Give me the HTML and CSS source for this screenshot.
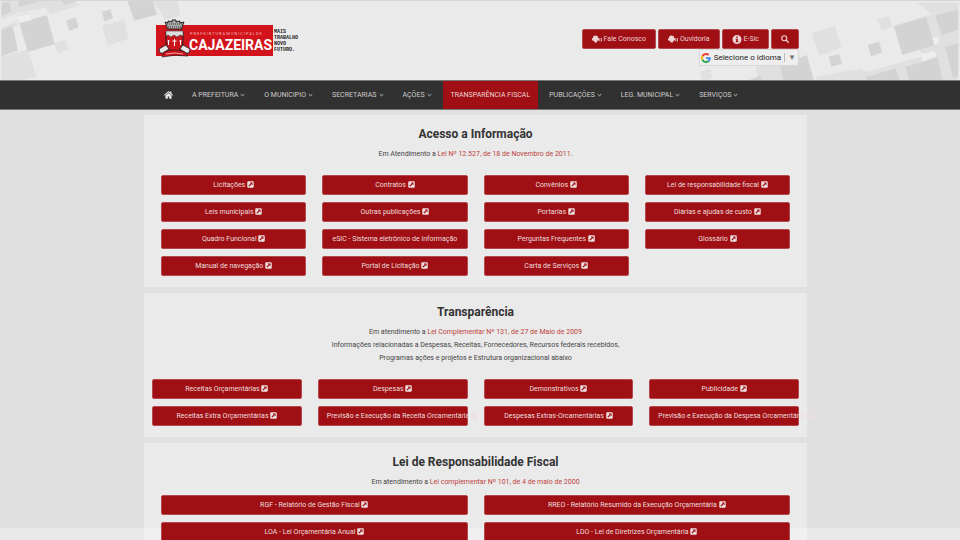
FILE: index.html
```html
<!DOCTYPE html>
<html lang="pt-BR">
<head>
<meta charset="utf-8">
<meta name="viewport" content="width=device-width, initial-scale=1">
<title>Prefeitura Municipal de Cajazeiras - Transparência Fiscal</title>
<link rel="stylesheet" href="styles.css">
</head>
<body>
<svg class="sprite" aria-hidden="true">
  <symbol id="ext" viewBox="0 0 14 14"><path fill="currentColor" fill-rule="evenodd" d="M2.5 0.5h9a2 2 0 0 1 2 2v9a2 2 0 0 1-2 2h-9a2 2 0 0 1-2-2v-9a2 2 0 0 1 2-2zM5.500 3l1.800 1.800L2.800 9.300l1.900 1.900L9.200 6.700 11 8.500V3z"/></symbol>
  <symbol id="down" viewBox="0 0 10 8"><path fill="none" stroke="currentColor" stroke-width="1.800" d="M1.500 2.500 5 5.500 8.500 2.500"/></symbol>
  <symbol id="bell" viewBox="0 0 20 16"><path fill="currentColor" d="M7 1c3 0 5 1.800 5.300 4.500 1.200.5 1.700 1.500 1.700 3s-1 3-3 3.200L9.500 15h-4L4 11.800C1.500 11.500 0 10.500 0 8.500S1 5.700 2 5.300C2.300 2.500 4 1 7 1z"/><path fill="none" stroke="currentColor" stroke-width="1.800" d="M15.500 6.500v6M18.500 6q1.500 3.500 0 7"/></symbol>
  <symbol id="info" viewBox="0 0 16 16"><path fill="currentColor" fill-rule="evenodd" d="M8 0a8 8 0 1 1 0 16A8 8 0 0 1 8 0zM6.500 2.500v2.300h3V2.500zM5.500 6.500v1.500h1v3.500h-1V13h5v-1.500h-1v-5z"/></symbol>
</svg>
<header class="header">
  <svg class="pattern pattern-left" viewBox="0 0 720 240" aria-hidden="true">
    <path fill="#e0e0e0" d="M0 0h190l-70 24-68 12-52 20zM130 12 215 0l22 12-90 28zM50 42l36-8 8 24-40 12zM305 75l68-18 12 58-62 20zM460 0h75l8 45-45 12zM160 128l35-10 8 30-30 12zM0 170l80-23 26 83-42 10H0zM0 80l45-16 6 10-51 16z"/>
    <path fill="#d3d3d3" d="M0 5h25l4 28-29 12zM55 0h65l-70 18zM180 0h50l-36 12zM382 0h78l12 42-68 18zM0 88l34-12 16 74-50 18zM54 67l84-24 24 88-82 24zM196 60l30-10 8 30-28 10zM305 33l26-7 8 26-26 10z"/>
    <path fill="#eeeeee" d="M50 46l36-8 6 20-36 9z"/>
  </svg>
  <svg class="pattern pattern-right" viewBox="360 0 840 240" aria-hidden="true">
    <path fill="#e0e0e0" d="M1075 5h125v235H590l-5-48 120-32 95 68 105-22 15 10 180-50-100-91 120-34zM755 97l70-20 20 65-68 25zM955 55l35-10 8 32-30 16zM415 215l32-8 6 28-30 8z"/>
    <path fill="#eaeaea" d="M706 162l14-4 78 52 110-6 10 36H762l-22-76z"/>
    <path fill="#e0e0e0" d="M770 230l136-26 14 36H770z"/>
    <path fill="#d3d3d3" d="M1005 78l97-30 26 86-98 30zM1130 45l70-20v62l-50 18zM925 134l34-10 10 32-34 12zM806 169l32-8 9 30-32 9zM660 198l80-34 20 76h-92zM1040 200l98-28 14 68h-102zM1160 140l40-12v98l-15 10zM920 232l90-28 12 36H920zM565 240l34-14 4 14z"/>
    <path fill="#eeeeee" d="M1086 164l42-14 5 18-42 16zM1122 112l16-5 4 20-16 6z"/>
  </svg>
  <div class="wrap header-row">
    <a class="logo" href="#" aria-label="Prefeitura Municipal de Cajazeiras">
      <svg viewBox="0 0 155 50" role="img" aria-label="Prefeitura Municipal de Cajazeiras">
        <path fill="#d3131b" d="M6 10h117v31H6z"/>
        <text class="logo-small" x="40" y="20">PREFEIRTURAMUNICIPALDE</text>
        <text class="logo-name" x="39" y="35">CAJAZEIRAS</text>
        <g class="logo-tag"><text x="124" y="18">MAIS</text><text x="124" y="24">TRABALHO</text><text x="124" y="30">NOVO</text><text x="124" y="36">FUTURO.</text></g>
        <path fill="#aaa" stroke="#222" stroke-width="1" d="M15 7l3 1V6l4 1V5l4 0v2l4-1v2l4-1-2 5v2H17v-2z"/>
        <path stroke="#333" stroke-width="1" stroke-dasharray="1 1" d="M17 9h15M18 12h13"/>
        <path fill="#c8161c" stroke="#222" stroke-width="1" d="M16 17h17v12q-1 6-8.500 9-7.500-3-8.500-9z"/>
        <path fill="#ddd" stroke="#444" stroke-width=".6" d="M16 16h17v5l-3-1-3 2-3-2-3 2-3-2-2 1z"/>
        <path stroke="#fff" stroke-width="1" d="M24.500 24v7M22.500 26h4M18.500 25v5M17.500 26h2M30.500 25v5M29.500 26h2"/>
        <path fill="#e8e8e8" stroke="#222" stroke-width=".8" d="M9 34l7-4 3 4-6 4-3 0zM40 34l-7-4-3 4 6 4 3 0z"/>
        <path fill="#d3131b" stroke="#222" stroke-width=".7" d="M14 37q11-4 21 0l3 4q-13-2-26 1z"/>
        <path stroke="#fff" stroke-width=".6" fill="none" d="M16 39q9-2 17 0"/>
      </svg>
    </a>
    <div class="tools">
      <div class="tool-buttons">
        <a class="tool" href="#"><svg class="i-bell"><use href="#bell"/></svg>Fale Conosco</a>
        <a class="tool" href="#"><svg class="i-bell"><use href="#bell"/></svg>Ouvidoria</a>
        <a class="tool" href="#"><svg class="i-info"><use href="#info"/></svg>E-Sic</a>
        <button class="tool" type="button" aria-label="Buscar"><svg class="i-search" viewBox="0 0 16 16"><circle cx="6.500" cy="6.500" r="5" fill="none" stroke="currentColor" stroke-width="2.200"/><path stroke="currentColor" stroke-width="2.600" stroke-linecap="round" d="m10.500 10.500 4 4"/></svg></button>
      </div>
      <button class="lang" type="button">
        <svg class="i-google" viewBox="0 0 48 48" aria-hidden="true"><path fill="#ea4335" d="M24 9.500c3.500 0 6.700 1.200 9.200 3.600l6.900-6.900C35.900 2.400 30.500 0 24 0 14.600 0 6.500 5.400 2.600 13.200l8 6.200C12.400 13.700 17.700 9.500 24 9.500z"/><path fill="#4285f4" d="M47 24.500c0-1.600-.2-3.100-.4-4.500H24v9h12.900c-.6 3-2.200 5.500-4.700 7.200l7.700 6c4.500-4.200 7.100-10.400 7.100-17.700z"/><path fill="#fbbc05" d="M10.500 28.600a14.500 14.500 0 0 1 0-9.200l-8-6.200a24 24 0 0 0 0 21.600z"/><path fill="#34a853" d="M24 48c6.500 0 11.900-2.100 15.900-5.800l-7.700-6c-2.200 1.500-4.900 2.300-8.200 2.300-6.300 0-11.600-4.200-13.500-9.900l-8 6.200C6.500 42.600 14.600 48 24 48z"/></svg>
        <span>Selecione o idioma</span><span class="lang-arrow">▼</span>
      </button>
    </div>
  </div>
</header>
<nav class="nav" aria-label="Principal">
  <div class="wrap">
    <ul class="menu">
      <li><a href="#" aria-label="Início"><svg class="i-home" viewBox="0 0 18 16"><path fill="currentColor" d="M9 0 0 8l1.200 1.300L9 2.600l7.800 6.700L18 8l-3-2.700V1h-2.500v2.200zM9 4 3 9.200V15.500h4.500V11h3v4.500H15V9.200z"/></svg></a></li>
      <li><a href="#">A PREFEITURA<svg class="i-down"><use href="#down"/></svg></a></li>
      <li><a href="#">O MUNICIPIO<svg class="i-down"><use href="#down"/></svg></a></li>
      <li><a href="#">SECRETARIAS<svg class="i-down"><use href="#down"/></svg></a></li>
      <li><a href="#">AÇÕES<svg class="i-down"><use href="#down"/></svg></a></li>
      <li><a class="active" href="#">TRANSPARÊNCIA FISCAL</a></li>
      <li><a href="#">PUBLICAÇÕES<svg class="i-down"><use href="#down"/></svg></a></li>
      <li><a href="#">LEG. MUNICIPAL<svg class="i-down"><use href="#down"/></svg></a></li>
      <li><a href="#">SERVIÇOS<svg class="i-down"><use href="#down"/></svg></a></li>
    </ul>
  </div>
</nav>
<div class="page">
<main class="wrap main">
  <section class="panel">
    <h2>Acesso a Informação</h2>
    <p>Em Atendimento a <a href="#">Lei Nº 12.527, de 18 de Novembro de 2011</a>.</p>
    <div class="grid">
      <a class="btn" href="#">Licitações <svg><use href="#ext"/></svg></a>
      <a class="btn" href="#">Contratos <svg><use href="#ext"/></svg></a>
      <a class="btn" href="#">Convênios <svg><use href="#ext"/></svg></a>
      <a class="btn" href="#">Lei de responsabilidade fiscal <svg><use href="#ext"/></svg></a>
      <a class="btn" href="#">Leis municipais <svg><use href="#ext"/></svg></a>
      <a class="btn" href="#">Outras publicações <svg><use href="#ext"/></svg></a>
      <a class="btn" href="#">Portarias <svg><use href="#ext"/></svg></a>
      <a class="btn" href="#">Diárias e ajudas de custo <svg><use href="#ext"/></svg></a>
      <a class="btn" href="#">Quadro Funcional <svg><use href="#ext"/></svg></a>
      <a class="btn" href="#">eSIC - Sistema eletrônico de informação</a>
      <a class="btn" href="#">Perguntas Frequentes <svg><use href="#ext"/></svg></a>
      <a class="btn" href="#">Glossário <svg><use href="#ext"/></svg></a>
      <a class="btn" href="#">Manual de navegação <svg><use href="#ext"/></svg></a>
      <a class="btn" href="#">Portal de Licitação <svg><use href="#ext"/></svg></a>
      <a class="btn" href="#">Carta de Serviços <svg><use href="#ext"/></svg></a>
    </div>
  </section>
  <section class="panel">
    <h2>Transparência</h2>
    <p>Em atendimento a <a href="#">Lei Complementar Nº 131, de 27 de Maio de 2009</a><br>Informações relacionadas a Despesas, Receitas, Fornecedores, Recursos federais recebidos,<br>Programas ações e projetos e Estrutura organizacional abaixo</p>
    <div class="grid grid-wide">
      <a class="btn" href="#">Receitas Orçamentárias <svg><use href="#ext"/></svg></a>
      <a class="btn" href="#">Despesas <svg><use href="#ext"/></svg></a>
      <a class="btn" href="#">Demonstrativos <svg><use href="#ext"/></svg></a>
      <a class="btn" href="#">Publicidade <svg><use href="#ext"/></svg></a>
      <a class="btn" href="#">Receitas Extra Orçamentárias <svg><use href="#ext"/></svg></a>
      <a class="btn" href="#">Previsão e Execução da Receita Orcamentária <svg><use href="#ext"/></svg></a>
      <a class="btn" href="#">Despesas Extras-Orcamentárias <svg><use href="#ext"/></svg></a>
      <a class="btn" href="#">Previsão e Execução da Despesa Orcamentária <svg><use href="#ext"/></svg></a>
    </div>
  </section>
  <section class="panel panel-tight">
    <h2>Lei de Responsabilidade Fiscal</h2>
    <p>Em atendimento a <a href="#">Lei complementar Nº 101, de 4 de maio de 2000</a></p>
    <div class="grid grid-two">
      <a class="btn" href="#">RGF - Relatório de Gestão Fiscal <svg><use href="#ext"/></svg></a>
      <a class="btn" href="#">RREO - Relatório Resumido da Execução Orçamentária <svg><use href="#ext"/></svg></a>
      <a class="btn" href="#">LOA - Lei Orçamentária Anual <svg><use href="#ext"/></svg></a>
      <a class="btn" href="#">LDO - Lei de Diretrizes Orçamentária <svg><use href="#ext"/></svg></a>
    </div>
  </section>
</main>
</div>
<div class="status-strip"></div>
</body>
</html>
```
FILE: styles.css
```css
* { box-sizing: border-box; }
html { overflow: hidden; }
body {
  margin: 0;
  background: #e0e0e0;
  color: #444;
  font-family: Roboto, "Liberation Sans", sans-serif;
  font-size: 7px;
  line-height: 13px;
}
a { text-decoration: none; }
.sprite { position: absolute; width: 0; height: 0; }
.header, .nav, .page { padding-right: 9px; }
.wrap { max-width: 663px; margin: 0 auto; }

/* Header */
.header {
  position: relative;
  background: #eaeaea;
  border-top: 1px solid #d6d6d6;
}
.pattern { position: absolute; top: 0; height: 79px; }
.pattern-left { left: 0; width: 240px; }
.pattern-right { right: 0; width: 280px; }
.header-row {
  position: relative;
  display: flex;
  justify-content: space-between;
  padding: 14px 8px 14px 6px;
}
.logo svg { display: block; width: 155px; height: 50px; }
.logo-small { font: 4px Roboto, sans-serif; letter-spacing: 1px; fill: #f3b5b7; }
.logo-name { font: bold 14px Roboto, sans-serif; fill: #fff; }
.logo-tag { font: bold 5px "Liberation Mono", monospace; fill: #222; }
.tools {
  display: flex;
  flex-direction: column;
  align-items: flex-end;
  padding-top: 14px;
}
.tool-buttons { display: flex; gap: 2px; }
.tool {
  display: flex;
  align-items: center;
  gap: 2px;
  height: 20px;
  padding: 0 9px;
  border: 1px solid #b34a4e;
  border-radius: 2px;
  background: #a00f14;
  color: #ecd3d4;
  font: inherit;
}
.i-bell { width: 10px; height: 8px; }
.i-info { width: 10px; height: 9px; }
.i-search { width: 8px; height: 8px; }
.lang {
  display: flex;
  align-items: center;
  gap: 3px;
  height: 17px;
  padding: 0 2px 0 1px;
  border: 1px solid #d8d8d8;
  background: #eee;
  color: #222;
  font: inherit;
  font-size: 8px;
}
.i-google { width: 10px; height: 10px; }
.lang-arrow {
  padding-left: 3px;
  border-left: 1px solid #bbb;
  color: #777;
  line-height: 9px;
}

/* Navigation */
.nav {
  background: #313131;
  border-top: 1px solid #777;
  border-bottom: 1px solid #777;
}
.menu {
  display: flex;
  gap: 3px;
  margin: 0;
  padding: 0 0 0 12px;
  list-style: none;
}
.menu a {
  display: flex;
  align-items: center;
  gap: 2px;
  height: 28px;
  padding: 0 8px;
  color: #ccc;
  white-space: nowrap;
}
.menu a.active { background: #a00f14; color: #ecd3d4; }
.i-home { width: 9px; height: 8px; color: #eee; }
.i-down { width: 5px; height: 4px; }

/* Content panels */
.main {
  display: flex;
  flex-direction: column;
  gap: 6px;
  padding: 5px 0;
}
.panel {
  padding: 13px 17px 11px;
  background: #eaeaea;
  text-align: center;
}
h2 {
  margin: 0 0 7px;
  color: #333;
  font-size: 12px;
  font-weight: bold;
  line-height: 13px;
}
p { margin: 0 0 14px; }
p a { color: #bd3f3a; }
.panel-tight p { margin-bottom: 6px; }
.grid {
  display: grid;
  grid-template-columns: repeat(4, minmax(0, 1fr));
  gap: 7px 16px;
}
.grid-wide { margin: 0 -9px; }
.grid-two { grid-template-columns: repeat(2, minmax(0, 1fr)); }
.btn {
  position: relative;
  z-index: 2;
  height: 20px;
  padding: 0 8px;
  border: 1px solid #b34a4e;
  border-radius: 2px;
  background: #a00f14;
  color: #ecdfdf;
  line-height: 18px;
  white-space: nowrap;
}
.btn svg { width: 7px; height: 7px; vertical-align: -1px; }

/* Translucent strip along the bottom of the window */
.status-strip {
  position: fixed;
  z-index: 1;
  right: 0;
  bottom: 0;
  left: 0;
  height: 12px;
  background: rgba(255, 255, 255, .3);
}
```
